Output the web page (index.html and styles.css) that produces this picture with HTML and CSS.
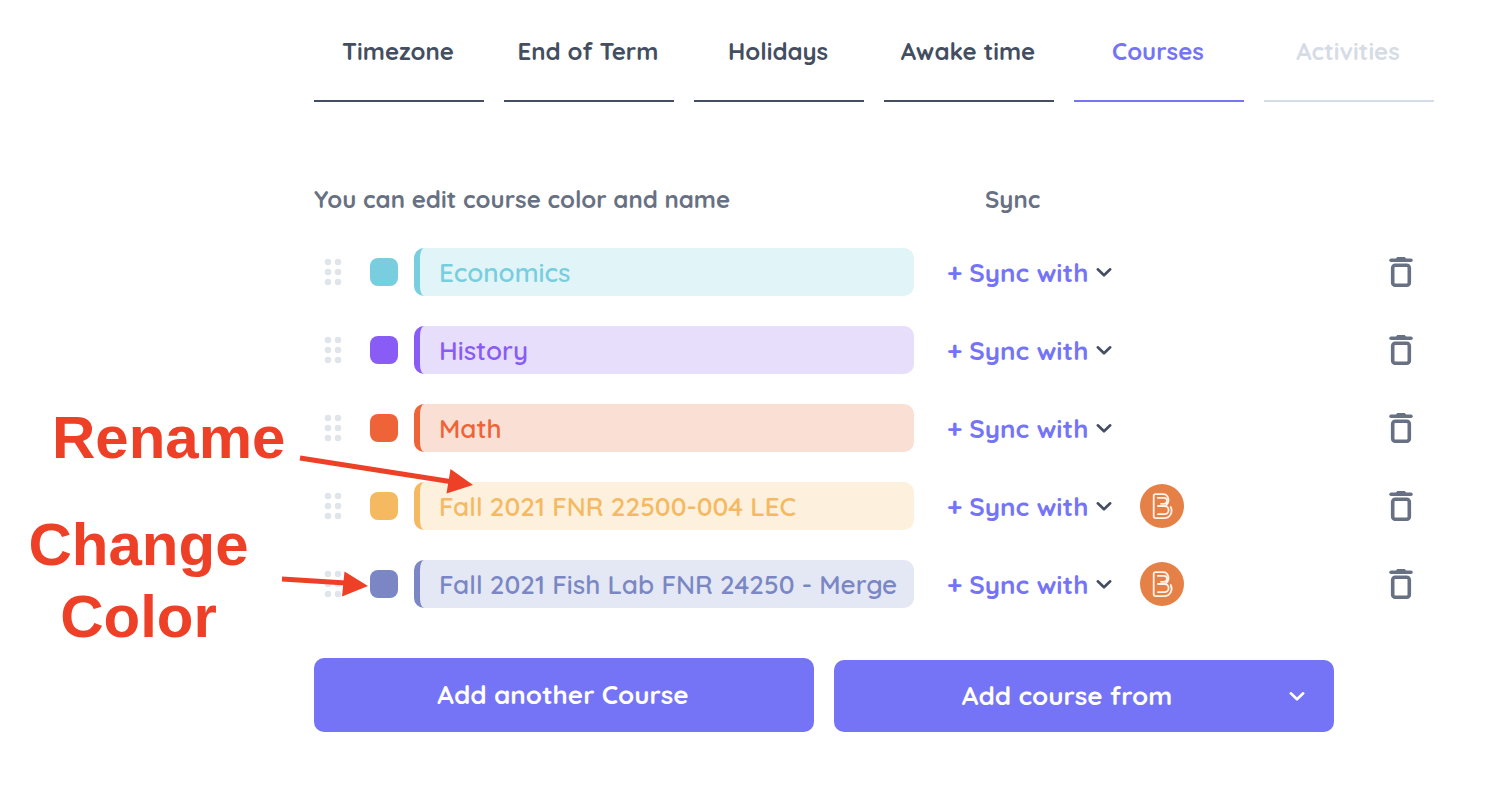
FILE: index.html
```
<!DOCTYPE html>
<html lang="en">

<head>
    <meta charset="UTF-8">
    <meta name="viewport" content="width=device-width, initial-scale=1.0">
    <title>Courses</title>
    <link rel="stylesheet" href="styles.css">
</head>

<body>
    <!-- shared icons -->
    <svg class="sprite" aria-hidden="true">
        <symbol id="dots" viewBox="0 0 18 28">
            <circle cx="4" cy="4" r="3.3" /><circle cx="14" cy="4" r="3.3" />
            <circle cx="4" cy="14" r="3.3" /><circle cx="14" cy="14" r="3.3" />
            <circle cx="4" cy="24" r="3.3" /><circle cx="14" cy="24" r="3.3" />
        </symbol>
        <symbol id="chevron" viewBox="0 0 16 10">
            <path d="M1.800 2.300l6.200 6 6.200-6" fill="none" stroke="currentColor" stroke-width="2.600" stroke-linecap="round" stroke-linejoin="round" />
        </symbol>
        <symbol id="trash" viewBox="0 0 24 32">
            <path d="M2 4.200h20" stroke="currentColor" stroke-width="3.400" stroke-linecap="round" />
            <path d="M6.500 3.500l1.700-2.500h7.600l1.700 2.500z" fill="currentColor" />
            <rect x="3.700" y="9.200" width="16.600" height="20" rx="2.500" fill="none" stroke="currentColor" stroke-width="3.600" />
        </symbol>
        <symbol id="brand" viewBox="0 0 44 44">
            <circle cx="22" cy="22" r="22" fill="#e58146" />
            <g fill="none" stroke="#fff" stroke-opacity=".9" stroke-width="1.800" stroke-linecap="round" stroke-linejoin="round">
                <path d="M17.800 13.800h6.200a3 3 0 0 1 0 6h-3" />
                <path d="M18 22h6.500a4 4 0 0 1 0 8.200H18" />
                <path d="M26.500 20.800c3.500-3.200 2.200-10.600-3.500-10.600h-7.500a1.800 1.800 0 0 0-1.800 1.800v20.400a1.800 1.800 0 0 0 1.800 1.800h8.500c6.500 0 9-6.400 6.700-11.200" />
            </g>
        </symbol>
    </svg>

    <main class="page">
        <nav class="tabs">
            <a class="tab" href="#timezone">Timezone</a>
            <a class="tab" href="#term">End of Term</a>
            <a class="tab" href="#holidays">Holidays</a>
            <a class="tab" href="#awake">Awake time</a>
            <a class="tab active" href="#courses" aria-current="step">Courses</a>
            <a class="tab disabled" href="#activities" aria-disabled="true">Activities</a>
        </nav>

        <div class="head">
            <span>You can edit course color and name</span>
            <span class="head-sync">Sync</span>
        </div>

        <ul class="courses">
            <li class="course economics">
                <button class="icon-btn drag" aria-label="Reorder"><svg><use href="#dots" /></svg></button>
                <input class="color" type="color" value="#78cede" aria-label="Course color">
                <input class="name" type="text" value="Economics" aria-label="Course name">
                <button class="sync">+ Sync with <svg><use href="#chevron" /></svg></button>
                <span class="linked"></span>
                <button class="icon-btn delete" aria-label="Delete"><svg><use href="#trash" /></svg></button>
            </li>
            <li class="course history">
                <button class="icon-btn drag" aria-label="Reorder"><svg><use href="#dots" /></svg></button>
                <input class="color" type="color" value="#895cf6" aria-label="Course color">
                <input class="name" type="text" value="History" aria-label="Course name">
                <button class="sync">+ Sync with <svg><use href="#chevron" /></svg></button>
                <span class="linked"></span>
                <button class="icon-btn delete" aria-label="Delete"><svg><use href="#trash" /></svg></button>
            </li>
            <li class="course math">
                <button class="icon-btn drag" aria-label="Reorder"><svg><use href="#dots" /></svg></button>
                <input class="color" type="color" value="#ee6337" aria-label="Course color">
                <input class="name" type="text" value="Math" aria-label="Course name">
                <button class="sync">+ Sync with <svg><use href="#chevron" /></svg></button>
                <span class="linked"></span>
                <button class="icon-btn delete" aria-label="Delete"><svg><use href="#trash" /></svg></button>
            </li>
            <li class="course lecture">
                <button class="icon-btn drag" aria-label="Reorder"><svg><use href="#dots" /></svg></button>
                <input class="color" type="color" value="#f5b961" aria-label="Course color">
                <input class="name" type="text" value="Fall 2021 FNR 22500-004 LEC" aria-label="Course name">
                <button class="sync">+ Sync with <svg><use href="#chevron" /></svg></button>
                <span class="linked"><svg><use href="#brand" /></svg></span>
                <button class="icon-btn delete" aria-label="Delete"><svg><use href="#trash" /></svg></button>
            </li>
            <li class="course lab">
                <button class="icon-btn drag" aria-label="Reorder"><svg><use href="#dots" /></svg></button>
                <input class="color" type="color" value="#7a87c4" aria-label="Course color">
                <input class="name" type="text" value="Fall 2021 Fish Lab FNR 24250 - Merge" aria-label="Course name">
                <button class="sync">+ Sync with <svg><use href="#chevron" /></svg></button>
                <span class="linked"><svg><use href="#brand" /></svg></span>
                <button class="icon-btn delete" aria-label="Delete"><svg><use href="#trash" /></svg></button>
            </li>
        </ul>

        <div class="actions">
            <button class="btn">Add another Course</button>
            <button class="btn btn-from"><span>Add course from</span><svg><use href="#chevron" /></svg></button>
        </div>
    </main>

    <!-- help notes drawn over the page -->
    <p class="note note-rename">Rename</p>
    <p class="note note-color">Change Color</p>
    <svg class="arrows" viewBox="0 0 480 600" aria-hidden="true">
        <path d="M300 458l150 23.500M282 579l64 4" stroke="#ed4027" stroke-width="5" />
        <path d="M473 485l-22.500-16-4 24.500zM368 586l-23.500-14.500-2.500 25z" fill="#ed4027" />
    </svg>
</body>

</html>
```

FILE: styles.css
```
* {
    padding: 0;
    margin: 0;
    box-sizing: border-box;
    font-family: Quicksand, 'Lato', sans-serif;
}

body {
    position: relative;
    background: #fff;
    color: #434e60;
    font-size: 24px;
    line-height: 32px;
}

button {
    background: none;
    border: none;
    cursor: pointer;
}

.sprite {
    display: none;
}

.page {
    padding: 0 66px 56px 314px;
}

.tabs {
    display: grid;
    grid-template-columns: repeat(6, 1fr);
    gap: 20px;
}

.tab {
    padding: 35px 2px 33px 0;
    border-bottom: 2px solid #434e60;
    color: #434e60;
    font-weight: 700;
    text-align: center;
    text-decoration: none;
    white-space: nowrap;
}

.tab.active {
    color: #7574f6;
    border-color: #7574f6;
}

.tab.disabled {
    color: #d6dce6;
    border-color: #d6dce6;
}

.head,
.course {
    display: grid;
    grid-template-columns: 56px 28px minmax(0, 516px) 226px 44px 1fr;
    align-items: center;
}

.head {
    margin-top: 81px;
    color: #677183;
    font-weight: 700;
}

.head span:first-child {
    grid-column: 1 / 4;
}

.head-sync {
    padding-left: 71px;
}

.courses {
    display: grid;
    gap: 30px;
    margin-top: 33px;
    list-style: none;
}

.icon-btn {
    display: flex;
}

.drag {
    padding-left: 10px;
    cursor: grab;
}

.drag svg {
    width: 18px;
    height: 28px;
    fill: #e0e5eb;
}

.color {
    width: 28px;
    height: 28px;
    border: none;
    border-radius: 8px;
    overflow: hidden;
    appearance: none;
    background: none;
    cursor: pointer;
}

.color::-webkit-color-swatch-wrapper {
    padding: 0;
}

.color::-webkit-color-swatch {
    border: none;
}

.name {
    min-width: 0;
    height: 48px;
    margin-left: 16px;
    padding: 0 10px 0 19px;
    border: none;
    border-left: 6px solid;
    border-radius: 10px;
    font-size: 26px;
    font-weight: 600;
}

.economics .name {
    color: #78cede;
    background: #e1f4f8;
}

.history .name {
    color: #895cf6;
    background: #e7defc;
}

.math .name {
    color: #ee6337;
    background: #fadfd4;
}

.lecture .name {
    color: #f5b961;
    background: #fdf0dc;
}

.lab .name {
    color: #7a87c4;
    background: #e4e7f4;
}

.sync {
    display: flex;
    align-items: center;
    gap: 8px;
    padding-left: 33px;
    color: #7574f6;
    font-size: 26px;
    font-weight: 700;
    white-space: nowrap;
}

.sync svg,
.btn svg {
    width: 16px;
    height: 10px;
}

.sync svg {
    color: #434e60;
}

.linked svg {
    display: block;
    width: 44px;
    height: 44px;
}

.delete {
    justify-self: end;
    margin-right: 21px;
    color: #677183;
}

.delete svg {
    width: 24px;
    height: 32px;
}

.actions {
    display: grid;
    grid-template-columns: 1fr 1fr;
    align-items: end;
    gap: 20px;
    max-width: 1020px;
    margin-top: 50px;
}

.btn {
    height: 74px;
    padding: 0 2px 2px 0;
    border-radius: 10px;
    background: #7574f6;
    color: #fff;
    font-size: 26px;
    font-weight: 700;
}

.btn-from {
    display: flex;
    align-items: center;
    height: 72px;
    padding: 0 29px 0 11px;
}

.btn-from span {
    flex: 1;
    padding-bottom: 2px;
}

.note {
    position: absolute;
    color: #ed4027;
    font: 700 60px/72px 'Liberation Sans', Arial, sans-serif;
    text-align: center;
}

.note-rename {
    top: 402px;
    left: 52px;
}

.note-color {
    top: 509px;
    left: 28px;
    width: 221px;
}

.arrows {
    position: absolute;
    top: 0;
    left: 0;
    width: 480px;
    height: 600px;
    pointer-events: none;
}
```
